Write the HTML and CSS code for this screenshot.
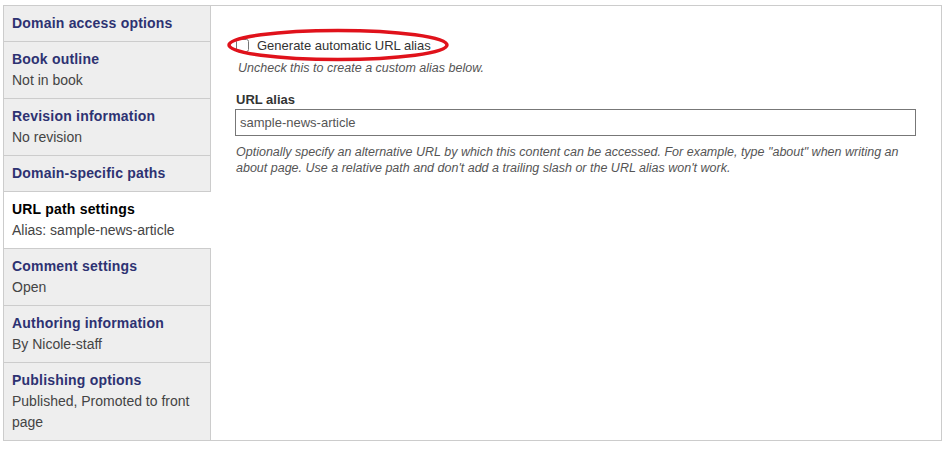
FILE: index.html
```html
<!DOCTYPE html>
<html lang="en">
<head>
    <meta charset="UTF-8">
    <title>URL path settings</title>
    <link rel="stylesheet" href="styles.css">
</head>
<body>
    <div class="tabs">
        <ul class="menu">
            <li><strong>Domain access options</strong></li>
            <li><strong>Book outline</strong><span>Not in book</span></li>
            <li><strong>Revision information</strong><span>No revision</span></li>
            <li><strong>Domain-specific paths</strong></li>
            <li class="active"><strong>URL path settings</strong><span>Alias: sample-news-article</span></li>
            <li><strong>Comment settings</strong><span>Open</span></li>
            <li><strong>Authoring information</strong><span>By Nicole-staff</span></li>
            <li><strong>Publishing options</strong><span>Published, Promoted to front page</span></li>
        </ul>
        <div class="panel">
            <div class="check-row">
                <input type="checkbox" id="auto">
                <label for="auto">Generate automatic URL alias</label>
                <svg class="circle" width="226" height="34" viewBox="0 0 226 34">
                    <ellipse cx="113" cy="17" rx="109" ry="14.5" fill="none" stroke="#e0121b" stroke-width="3.5"/>
                </svg>
            </div>
            <div class="desc first">Uncheck this to create a custom alias below.</div>
            <label class="field-label" for="alias">URL alias</label>
            <input class="text" type="text" id="alias" value="sample-news-article">
            <div class="desc">Optionally specify an alternative URL by which this content can be accessed. For example, type "about" when writing an about page. Use a relative path and don't add a trailing slash or the URL alias won't work.</div>
        </div>
    </div>
</body>
</html>
```

FILE: styles.css
```css
body {
    margin: 0;
    padding: 5px 0 0 3px;
    font-family: "Liberation Sans", Arial, sans-serif;
    background: #fff;
}

.tabs {
    display: flex;
    width: 937px;
    height: 434px;
    border: 1px solid #ccc;
}

/* menu on the left */
.menu {
    list-style: none;
    margin: 0;
    padding: 0;
    width: 209px;
    background: #eee;
    border-right: 1px solid #ccc;
}

.menu li {
    padding: 7px 8px 7px 8px;
    font-size: 14px;
    line-height: 21px;
    color: #555;
    border-top: 1px solid #ccc;
    background: #eee;
}

.menu li:first-child {
    border-top: 0;
}

.menu li strong {
    display: block;
    color: #2d3272;
    letter-spacing: 0.2px;
}

.menu li span {
    display: block;
    color: #444;
}

.menu li.active {
    background: #fff;
    margin-right: -1px;
}

.menu li.active strong {
    color: #000;
}

.panel {
    flex: 1;
    padding: 32px 25px 0 25px;
    font-size: 13px;
    color: #333;
}

.check-row {
    position: relative;
    display: flex;
    align-items: center;
    height: 14px;
}

.check-row input {
    margin: 0 8px 0 0;
    width: 13px;
    height: 13px;
}

.circle {
    position: absolute;
    left: -11px;
    top: -10px;
}

.desc {
    font-size: 12.5px;
    font-style: italic;
    color: #555;
    line-height: 16px;
    width: 670px;
    margin-top: 8px;
}

.desc.first {
    margin: 8px 0 0 2px;
}

.field-label {
    display: block;
    font-weight: bold;
    margin-top: 16px;
    line-height: 16px;
}

.text {
    display: block;
    box-sizing: border-box;
    width: 681px;
    height: 27px;
    margin: 1px 0 0 -1px;
    padding: 0 4px;
    border: 1px solid #777;
    font-family: "Liberation Sans", Arial, sans-serif;
    font-size: 13px;
    color: #555;
}
```
